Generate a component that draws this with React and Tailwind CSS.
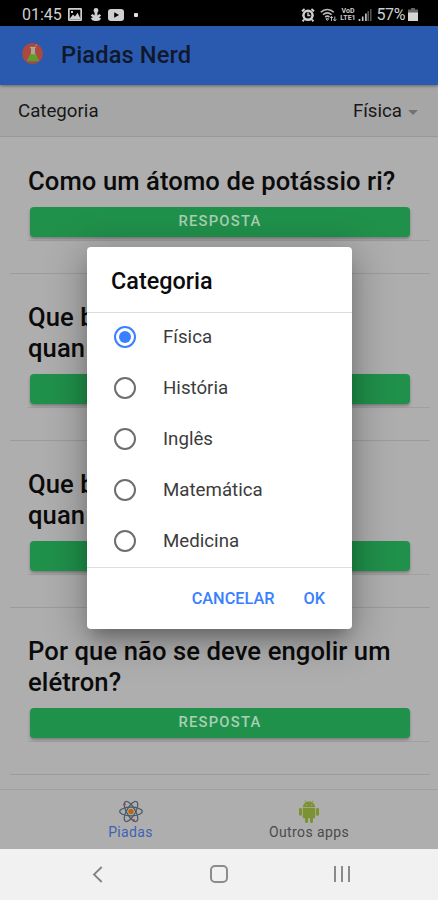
import { useState } from 'react';

const JOKES = [
  { lines: ['Como um átomo de potássio ri?'] },
  { lines: ['Que b', 'quan'] },
  { lines: ['Que b', 'quan'] },
  { lines: ['Por que não se deve engolir um', 'elétron?'] },
];

const CATEGORIES = ['Física', 'História', 'Inglês', 'Matemática', 'Medicina'];

export default function App() {
  const [category, setCategory] = useState('Física');

  return (
    <div className="relative flex h-[900px] w-[438px] flex-col overflow-hidden bg-[#aeaeae] font-['Roboto',sans-serif] text-[#0b0b0b]">
      <StatusBar />

      {/* Toolbar */}
      <header className="z-10 flex h-[59px] shrink-0 items-center bg-[#2a5ab0] pl-[22px] shadow-[0_1px_3px_rgba(0,0,0,0.4)]">
        <FlaskLogo />
        <h1 className="ml-[18px] pt-px text-[23.7px] leading-none font-medium tracking-[0.1px] text-[#10182a]">Piadas Nerd</h1>
      </header>

      {/* Category select */}
      <div className="flex h-[52px] shrink-0 items-center justify-between border-b border-[#989898] bg-[#a6a6a6] pt-[2px] pr-[20px] pl-[18px] text-[18.7px] text-[#181818]">
        <span>Categoria</span>
        <div className="flex items-center gap-[6px]">
          <span>{category}</span>
          <span className="mt-[2px] border-x-[5px] border-t-[5px] border-x-transparent border-t-[#727272]" />
        </div>
      </div>

      <main className="min-h-0 flex-1 overflow-hidden pt-px">
        {JOKES.map((joke, i) => (
          <JokeCard key={i} lines={joke.lines} />
        ))}
      </main>

      {/* Tabs */}
      <nav className="flex h-[60px] shrink-0 justify-center border-t border-[#a0a0a0] text-[14px] leading-none">
        <div className="flex w-[178px] flex-col items-center pt-[10px] pl-px text-[#3f62b4]">
          <AtomIcon />
          <span className="mt-[2px] tracking-[0.35px]">Piadas</span>
        </div>
        <div className="flex w-[178px] flex-col items-center pt-[10px] pl-[2px] text-[#4b4b4b]">
          <AndroidIcon />
          <span className="mt-[2px] tracking-[0.4px]">Outros apps</span>
        </div>
      </nav>

      <SystemNav />

      {/* Category dialog */}
      <div className="absolute top-[247px] left-[87px] z-20 flex h-[382px] w-[265px] flex-col rounded-[4px] bg-white shadow-[0_12px_16px_-6px_rgba(0,0,0,0.28),0_8px_38px_6px_rgba(0,0,0,0.25)]">
        <h2 className="flex h-[66px] items-center border-b border-[#dcdcdc] pt-[5px] pl-[24px] text-[23.4px] font-medium">Categoria</h2>
        <div className="h-[255px] border-b border-[#dfdfdf]">
          {CATEGORIES.map(name => (
            <button key={name} onClick={() => setCategory(name)} className="flex h-[51px] w-full items-center pb-[3px] pl-[27px] text-[18.7px] text-[#3c3c3c]">
              <Radio checked={name === category} />
              <span className="ml-[27px] pt-px">{name}</span>
            </button>
          ))}
        </div>
        <div className="flex flex-1 items-center justify-end gap-[29px] pt-px pr-[27px] text-[16.3px] font-medium text-[#3880ff]">
          <button>CANCELAR</button>
          <button>OK</button>
        </div>
      </div>
    </div>
  );
}

function JokeCard({ lines }) {
  return (
    <section className="mr-[8px] ml-[10px] border-b border-[#9c9c9c] pt-[28px] pl-[18px]">
      <h3 className="text-[25.6px] leading-[31px] font-medium tracking-[0.1px] whitespace-nowrap">
        {lines.map(line => <div key={line}>{line}</div>)}
      </h3>
      <div className="border-b border-[#a0a0a0] pt-[10px] pr-[20px] pb-[3px] pl-[2px]">
        <button className="block h-[30px] w-full rounded-[4px] bg-[#20914b] pb-[1px] text-[14.8px] leading-none font-medium tracking-[1.2px] text-[#a9cfb6] shadow-[0_2px_3px_rgba(0,0,0,0.28)]">
          RESPOSTA
        </button>
      </div>
      <div className="h-[32px]" />
    </section>
  );
}

function Radio({ checked }) {
  return (
    <span className={`flex size-[22px] items-center justify-center rounded-full border-2 ${checked ? 'border-[#3880ff]' : 'border-[#6e6e6e]'}`}>
      {checked && <span className="size-[12px] rounded-full bg-[#3880ff]" />}
    </span>
  );
}

function StatusBar() {
  return (
    <div className="flex h-[26px] shrink-0 items-center justify-between bg-black pt-[3px] pr-[20px] pl-[22px] text-[16px] leading-none text-[#cfcfcf]">
      <div className="flex items-center">
        <span>01:45</span>
        <svg className="ml-[6px]" width="14" height="13" viewBox="0 0 14 13">
          <rect x="0.8" y="0.8" width="12.4" height="11.4" rx="1" fill="none" stroke="#d0d0d0" strokeWidth="1.8" />
          <path d="M1.5 11l3.5-4.6 2 2 2.6-3.6 3 6.2z" fill="#d0d0d0" />
          <rect x="3" y="3" width="2" height="2" fill="#d0d0d0" />
        </svg>
        <svg className="ml-[8px]" width="12" height="13" viewBox="0 0 12 13" fill="#d0d0d0">
          <circle cx="6" cy="2.4" r="2.4" />
          <path d="M4.6 3h2.8v4.5l2-1.6 1.8 1.5L9 9.5l2 .7-1 1.8c-2 1.3-6 1.3-8 0L.8 10l2.2-.5L.6 7.4l2-1.5 2 1.6z" />
        </svg>
        <svg className="ml-[6px]" width="16" height="12" viewBox="0 0 16 12">
          <rect width="16" height="12" rx="3" fill="#d0d0d0" />
          <path d="M6.2 3.3v5.4L11 6z" fill="#000" />
        </svg>
        <span className="ml-[10px] size-[4px] rounded-[1px] bg-[#e0e0e0]" />
      </div>
      <div className="flex items-center">
        <svg width="14" height="14" viewBox="0 0 14 14">
          <circle cx="7" cy="7.3" r="5.8" fill="#d0d0d0" />
          <path d="M1 3.2L3.6 1M13 3.2L10.4 1M3 11.5l-1.4 1.8M11 11.5l1.4 1.8" stroke="#d0d0d0" strokeWidth="2" />
          <circle cx="7" cy="7.3" r="3.3" fill="#000" />
          <path d="M7 4.5v3h2.3" fill="none" stroke="#d0d0d0" strokeWidth="1.4" />
        </svg>
        <svg className="ml-[5px]" width="17" height="14" viewBox="0 0 17 14" fill="none" stroke="#b8b8b8">
          <path d="M.8 4.3c3.6-3.8 9.4-3.8 13 0M3 6.7c2.4-2.5 6.2-2.5 8.6 0M5.2 9.1c1.2-1.3 3-1.3 4.2 0" strokeWidth="1.6" />
          <path d="M7.3 12.5l-1.4-1.7h2.8zM11.5 13V8.5M10 10l1.5-1.7L13 10M14.8 8.5V13M13.3 11.3l1.5 1.7 1.5-1.7" />
        </svg>
        <div className="ml-[2px] flex w-[17px] flex-col items-center text-[7px] leading-[7px] font-bold">
          <span>VoD</span>
          <span className="whitespace-nowrap">LTE1</span>
        </div>
        <svg className="ml-[2px]" width="14" height="13" viewBox="0 0 14 13">
          <path d="M1.5 11v2M4.7 8.5V13M7.9 5.5V13" stroke="#c8c8c8" strokeWidth="1.6" />
          <path d="M10.2 3v10M12.8 1v12" stroke="#666" strokeWidth="1.3" />
        </svg>
        <span className="ml-[4px] tracking-[-0.4px]">57%</span>
        <svg className="ml-[3px]" width="10" height="13" viewBox="0 0 10 13">
          <path d="M3 0h4v1.5h3V5H0V1.5h3z" fill="#666" />
          <path d="M0 4.5h10V13H0z" fill="#d4d4d4" />
        </svg>
      </div>
    </div>
  );
}

function FlaskLogo() {
  return (
    <svg className="mb-[5px]" width="21" height="21" viewBox="0 0 21 21">
      <circle cx="10.5" cy="10.5" r="10.5" fill="#aa493d" />
      <path d="M9 5h4v5l3.6 7.2H5.4L9 10z" fill="#a9a794" />
      <path d="M8.4 11.3h5.2l3.4 7H5z" fill="#5e9c2e" />
      <path d="M8 4.5h5.8" stroke="#b8a79a" strokeWidth="1.2" />
      <path d="M13.5 3l1.5-1.5" stroke="#c9a69a" />
    </svg>
  );
}

function AtomIcon() {
  return (
    <svg width="24" height="23" viewBox="0 0 24 23" fill="none" stroke="#4a5a68" strokeWidth="1.2">
      <ellipse cx="12" cy="11.5" rx="11.3" ry="4.3" />
      <ellipse cx="12" cy="11.5" rx="11.3" ry="4.3" transform="rotate(60 12 11.5)" />
      <ellipse cx="12" cy="11.5" rx="11.3" ry="4.3" transform="rotate(120 12 11.5)" />
      <circle cx="12" cy="11.5" r="2.7" fill="#b8690f" stroke="none" />
      <circle cx="5.5" cy="4.3" r="1.3" fill="#a8474a" stroke="none" />
      <circle cx="14.7" cy="20.4" r="1.3" fill="#a8474a" stroke="none" />
    </svg>
  );
}

function AndroidIcon() {
  return (
    <svg width="20" height="23" viewBox="0 0 20 23" fill="#7d9230">
      <path d="M3.8 7.2C4 4 6.5 1.5 10 1.5S16 4 16.2 7.2z" />
      <path d="M5.8.6l1.4 2M14.2.6l-1.4 2" stroke="#7d9230" strokeWidth=".8" />
      <path d="M3.8 8h12.4v9c0 .8-.5 1.3-1.3 1.3H5.1c-.8 0-1.3-.5-1.3-1.3z" />
      <rect x="0" y="7.8" width="3" height="8" rx="1.5" />
      <rect x="17" y="7.8" width="3" height="8" rx="1.5" />
      <rect x="6" y="16" width="3" height="7" rx="1.5" />
      <rect x="11" y="16" width="3" height="7" rx="1.5" />
      <circle cx="7.3" cy="4.8" r=".6" fill="#aeaeae" />
      <circle cx="12.7" cy="4.8" r=".6" fill="#aeaeae" />
    </svg>
  );
}

function SystemNav() {
  return (
    <div className="flex h-[51px] shrink-0 items-center justify-between bg-[#f1f1f1] pr-[88px] pb-px pl-[92px]">
      <svg width="11" height="17" viewBox="0 0 11 17" fill="none" stroke="#828282" strokeWidth="1.8">
        <path d="M9.7 1L2 8.5l7.7 7.5" />
      </svg>
      <span className="ml-px size-[18px] rounded-[5px] border-2 border-[#8c8c8c]" />
      <div className="flex h-[16px] w-[16px] justify-between">
        <span className="w-[2px] bg-[#8a8a8a]" />
        <span className="w-[2px] bg-[#8a8a8a]" />
        <span className="w-[2px] bg-[#8a8a8a]" />
      </div>
    </div>
  );
}
